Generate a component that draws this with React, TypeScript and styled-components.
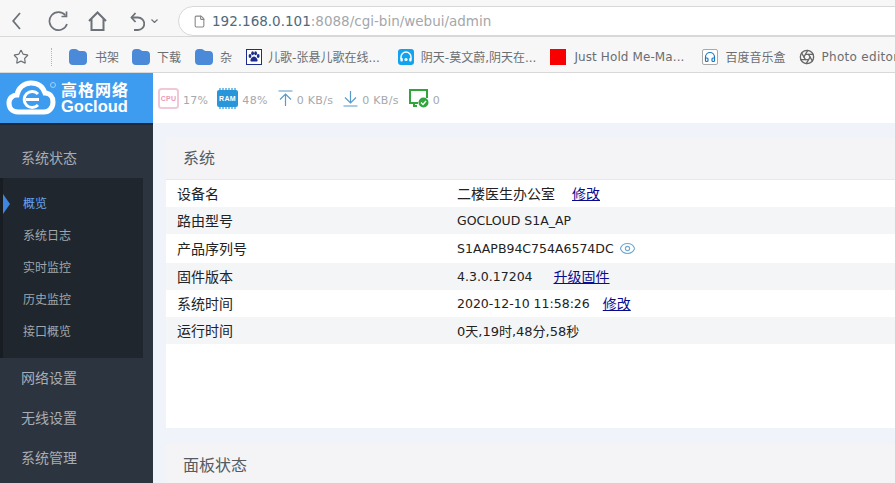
import * as React from 'react';
import styled, { createGlobalStyle } from 'styled-components';
import { Aperture, Eye, File, Headphones, Star } from 'lucide-react';

const GlobalStyle = createGlobalStyle`
  html, body {
    margin: 0;
    padding: 0;
    overflow: hidden;
    background: #fff;
    font-family: "DejaVu Sans", "Noto Sans CJK SC", sans-serif;
  }
  svg {
    flex: none;
  }
`;

const Page = styled.div`
  display: flex;
  flex-direction: column;
  width: 895px;
  height: 483px;
  overflow: hidden;
`;

const Toolbar = styled.div`
  display: flex;
  align-items: center;
  height: 36px;
  padding: 6px 0 0 12px;
  box-sizing: border-box;
  background: #f7f7f7;
  flex: none;
`;

const NavButton = styled.div<{ $left: number }>`
  display: flex;
  margin-left: ${(p) => p.$left}px;
`;

const Address = styled.div`
  display: flex;
  align-items: center;
  flex: 1;
  height: 30px;
  margin-left: 20px;
  margin-right: -20px;
  padding-left: 14px;
  box-sizing: border-box;
  background: #fff;
  border: 1px solid #d8d8d8;
  border-radius: 15px 0 0 15px;
  font-size: 13.5px;
  color: #a3a7ab;
`;

const Host = styled.span`
  color: #4e6a7c;
  margin-left: 6px;
`;

const Bookmarks = styled.div`
  display: flex;
  align-items: center;
  height: 37px;
  padding: 4px 0 0 13px;
  box-sizing: border-box;
  background: #f7f7f7;
  border-top: 1px solid #d8d8d8;
  border-bottom: 1px solid #d8d8d8;
  flex: none;
  white-space: nowrap;
`;

const Divider = styled.div`
  width: 0;
  height: 18px;
  margin: 0 17px 0 22px;
  border-left: 1px dotted #b5b5b5;
`;

const Bookmark = styled.div<{ $gap: number; $end: number; $track?: number }>`
  display: flex;
  align-items: center;
  gap: ${(p) => p.$gap}px;
  margin-right: ${(p) => p.$end}px;
  font-size: 12px;
  letter-spacing: ${(p) => p.$track ?? 0}px;
  color: #6a6e72;
  flex: none;
`;

const RedSquare = styled.div`
  width: 16px;
  height: 16px;
  background: #f80000;
`;

const BoxIcon = styled.div`
  display: flex;
  align-items: center;
  justify-content: center;
  width: 16px;
  height: 16px;
  box-sizing: border-box;
  border: 1px solid #a9a9a9;
  border-radius: 2px;
  background: #fff;
  color: #1a78c2;
`;

const Shell = styled.div`
  display: grid;
  grid-template-columns: 153px 1fr;
  grid-template-rows: 50px 1fr;
  flex: 1;
  min-height: 0;
`;

const Logo = styled.div`
  display: flex;
  align-items: center;
  gap: 3px;
  padding-left: 6px;
  background: #3e9cf0;
  color: #fff;
`;

const LogoText = styled.div`
  display: flex;
  flex-direction: column;
`;

const LogoCn = styled.span`
  font-size: 16px;
  font-weight: 700;
  letter-spacing: 1px;
  line-height: 17px;
`;

const LogoEn = styled.span`
  font-family: "Liberation Sans", sans-serif;
  font-size: 16.5px;
  font-weight: 700;
  line-height: 15px;
`;

const StatusBar = styled.div`
  display: flex;
  align-items: center;
  padding-left: 5px;
  background: #fff;
  font-size: 11px;
  letter-spacing: 0.3px;
  color: #a3a9ae;
`;

const Stat = styled.div<{ $end: number }>`
  display: flex;
  align-items: center;
  gap: 4px;
  margin-right: ${(p) => p.$end}px;
`;

const StatValue = styled.span`
  padding-top: 4px;
`;

const Sidebar = styled.nav`
  display: flex;
  flex-direction: column;
  padding-top: 13px;
  background: #2c3440;
  border-top: 2px solid #1d2a3a;
`;

const MenuItem = styled.div`
  height: 40px;
  line-height: 40px;
  padding-left: 21px;
  font-size: 14px;
  color: #a8adb3;
`;

const SubMenu = styled.div`
  width: 143px;
  height: 180px;
  padding: 10px 0 10px 20px;
  box-sizing: border-box;
  background: #1f262e;
  border-left: 3px solid #181d24;
`;

const SubItem = styled.div<{ $active?: boolean }>`
  position: relative;
  height: 32px;
  line-height: 32px;
  font-size: 12px;
  color: ${(p) => (p.$active ? '#6aa5ef' : '#a0a6ac')};
  ${(p) =>
    p.$active &&
    `&::before {
      content: '';
      position: absolute;
      left: -20px;
      top: 6px;
      border-left: 7px solid #3f86e2;
      border-top: 10px solid transparent;
      border-bottom: 10px solid transparent;
    }`}
`;

const Main = styled.main`
  display: flex;
  flex-direction: column;
  gap: 16px;
  padding: 14px 0 0 13px;
  background: #f0f3f9;
  overflow: hidden;
`;

const Panel = styled.section`
  background: #fff;
  flex: none;
`;

const PanelHead = styled.div`
  height: 43px;
  line-height: 43px;
  padding-left: 17px;
  box-sizing: border-box;
  background: #f4f4f6;
  border-bottom: 1px solid #e6e8ec;
  font-size: 16px;
  color: #555b60;
`;

const PanelBody = styled.div`
  height: 248px;
`;

const Row = styled.div<{ $tall?: boolean }>`
  display: grid;
  grid-template-columns: 280px 1fr;
  align-items: center;
  height: ${(p) => (p.$tall ? 29 : 27)}px;
  padding-left: 11px;
  color: #222;
  &:nth-child(even) {
    background: #f4f5f7;
  }
`;

const Label = styled.span`
  padding-bottom: 2px;
  font-size: 14px;
`;

const Value = styled.div`
  display: flex;
  align-items: center;
  font-size: 12.5px;
`;

const WideText = styled.span`
  padding-bottom: 2px;
  font-size: 14px;
`;

const MixedText = styled.span`
  font-size: 13px;
`;

const EditLink = styled.a<{ $left: number }>`
  margin: 0 0 2px ${(p) => p.$left}px;
  font-size: 14px;
  color: #0b0b8f;
  text-decoration: underline;
`;

const EyeIcon = styled(Eye)`
  margin-left: 5px;
  color: #6da7d3;
`;

const BackIcon = () => (
  <svg width="9" height="18" viewBox="0 0 9 18" fill="none" stroke="#6d7278" strokeWidth="1.8">
    <path d="M8 1 1.2 9 8 17" />
  </svg>
);

const ReloadIcon = () => (
  <svg width="21" height="20" viewBox="0 0 21 20" fill="none" stroke="#6d7278" strokeWidth="1.7">
    <path d="M17.500 4.500A9 9 0 1 0 19 13" />
    <path d="M18.500 0.500v5h-5" />
  </svg>
);

const HomeIcon = () => (
  <svg width="19" height="20" viewBox="0 0 19 20" fill="none" stroke="#6d7278" strokeWidth="2">
    <path d="M1 10 9.500 1.500 18 10M3.500 8v11h12V8" />
  </svg>
);

const UndoIcon = () => (
  <svg width="15" height="19" viewBox="0 0 15 19" fill="none" stroke="#6d7278" strokeWidth="1.8">
    <path d="M1.500 5.500H8a6 6 0 0 1 0 12.500H4" />
    <path d="M5.500 1 1.500 5.500 5.500 10" />
  </svg>
);

const CaretIcon = () => (
  <svg width="7" height="4" viewBox="0 0 7 4" fill="none" stroke="#6d7278" strokeWidth="1.2">
    <path d="M0.500 0.500 3.500 3.500 6.500 0.500" />
  </svg>
);

const Cloud = () => (
  <svg width="52" height="36" viewBox="0 0 52 36" fill="none">
    <path
      d="M12 32C6 32 3 28 3 23c0-5 4-8 8-8 1-7 7-12 14-12 7 0 12 4 14 10 5 0 8 4 8 9 0 6-4 10-9 10z"
      stroke="#fff"
      strokeWidth="5"
    />
    <path d="M32 14a8 8 0 1 0 0 11" stroke="#fff" strokeWidth="3" />
    <path d="M20 19.500h13" stroke="#fff" strokeWidth="3" />
    <circle cx="47" cy="5" r="2.500" stroke="#9fd0fa" strokeWidth="1" />
  </svg>
);

const Folder = () => (
  <svg width="18" height="17" viewBox="0 0 18 17">
    <path d="M0 5a4 4 0 0 1 4-4h2c2.500 0 3 2 5 2h3a4 4 0 0 1 4 4v6a4 4 0 0 1-4 4H4a4 4 0 0 1-4-4z" fill="#4a8ad8" />
  </svg>
);

const Paw = () => (
  <svg width="16" height="16" viewBox="0 0 16 16">
    <rect x="0.500" y="0.500" width="15" height="15" fill="#fff" stroke="#1c2c90" />
    <g fill="#1c2c90">
      <ellipse cx="4" cy="7" rx="1.400" ry="2" />
      <ellipse cx="6.600" cy="4.200" rx="1.400" ry="2" />
      <ellipse cx="9.600" cy="4.200" rx="1.400" ry="2" />
      <ellipse cx="12.200" cy="7" rx="1.400" ry="2" />
      <path d="M8 7.500c2 0 3.600 2.400 3.600 4 0 1.500-2 1-3.600 1s-3.600.5-3.600-1c0-1.600 1.600-4 3.600-4z" />
    </g>
  </svg>
);

const Dudu = () => (
  <svg width="16" height="16" viewBox="0 0 16 16">
    <rect width="16" height="16" rx="3" fill="#12a3ee" />
    <path d="M3 10V8a5 5 0 0 1 10 0v2" stroke="#fff" strokeWidth="1.4" fill="none" />
    <rect x="2.400" y="9" width="2.400" height="3.400" rx="1" fill="#fff" />
    <rect x="11.200" y="9" width="2.400" height="3.400" rx="1" fill="#fff" />
    <circle cx="8" cy="10.500" r="1.600" fill="#fff" />
  </svg>
);

const CpuIcon = () => (
  <svg width="21" height="21" viewBox="0 0 21 21">
    <rect x="1" y="1" width="19" height="19" rx="2.500" fill="#fff" stroke="#f0c8d8" strokeWidth="2" />
    <text x="10.500" y="13" fontSize="7" fontWeight="700" textAnchor="middle" fill="#eb9ab8" fontFamily="Liberation Sans">
      CPU
    </text>
  </svg>
);

const RamIcon = () => (
  <svg width="21" height="21" viewBox="0 0 21 21">
    <rect x="0" y="2" width="21" height="17" rx="2" fill="#2a96da" />
    <path d="M3 0v21M6 0v21M9 0v21M12 0v21M15 0v21M18 0v21" stroke="#2a96da" strokeWidth="1.2" />
    <text x="10.500" y="13" fontSize="7" fontWeight="700" textAnchor="middle" fill="#fff" fontFamily="Liberation Sans">
      RAM
    </text>
  </svg>
);

const UploadIcon = () => (
  <svg width="15" height="17" viewBox="0 0 15 17" fill="none" stroke="#5b9ac8" strokeWidth="1.2">
    <path d="M0.500 1h14M7.500 16V4M2 9.500l5.500-5.500 5.500 5.500" />
  </svg>
);

const DownloadIcon = () => (
  <svg width="15" height="17" viewBox="0 0 15 17" fill="none" stroke="#5b9ac8" strokeWidth="1.2">
    <path d="M0.500 16h14M7.500 1v12M2 7.500l5.500 5.500 5.500-5.500" />
  </svg>
);

const MonitorIcon = () => (
  <svg width="20" height="19" viewBox="0 0 20 19" fill="none">
    <path d="M9 14H1V1h17v8M5 14v3h3" stroke="#2fa63c" strokeWidth="2" />
    <circle cx="14.500" cy="13.500" r="5" fill="#2fa63c" />
    <path d="M12 13.500l2 2 3-3.500" stroke="#fff" strokeWidth="1.4" />
  </svg>
);

const bookmarks = [
  { icon: <Folder />, text: '书架', gap: 8, end: 13 },
  { icon: <Folder />, text: '下载', gap: 7, end: 14 },
  { icon: <Folder />, text: '杂', gap: 7, end: 14 },
  { icon: <Paw />, text: '儿歌-张悬儿歌在线...', gap: 6, end: 18 },
  { icon: <Dudu />, text: '阴天-莫文蔚,阴天在...', gap: 7, end: 14 },
  { icon: <RedSquare />, text: 'Just Hold Me-Ma...', gap: 8, end: 17, track: 0.1 },
  {
    icon: (
      <BoxIcon>
        <Headphones size={12} strokeWidth={2.4} />
      </BoxIcon>
    ),
    text: '百度音乐盒',
    gap: 8,
    end: 13,
  },
  { icon: <Aperture size={16} color="#666" />, text: 'Photo editor', gap: 7, end: 0, track: 0.3 },
];

const subItems = ['概览', '系统日志', '实时监控', '历史监控', '接口概览'];

export default function App() {
  return (
    <Page>
      <GlobalStyle />
      <Toolbar>
        <BackIcon />
        <NavButton $left={27}>
          <ReloadIcon />
        </NavButton>
        <NavButton $left={19}>
          <HomeIcon />
        </NavButton>
        <NavButton $left={23}>
          <UndoIcon />
        </NavButton>
        <NavButton $left={6}>
          <CaretIcon />
        </NavButton>
        <Address>
          <File size={13} color="#888" />
          <Host>192.168.0.101</Host>
          <span>:8088/cgi-bin/webui/admin</span>
        </Address>
      </Toolbar>
      <Bookmarks>
        <Star size={16} color="#6d7278" strokeWidth={1.8} />
        <Divider />
        {bookmarks.map((b) => (
          <Bookmark key={b.text} $gap={b.gap} $end={b.end} $track={b.track}>
            {b.icon}
            <span>{b.text}</span>
          </Bookmark>
        ))}
      </Bookmarks>
      <Shell>
        <Logo>
          <Cloud />
          <LogoText>
            <LogoCn>高格网络</LogoCn>
            <LogoEn>Gocloud</LogoEn>
          </LogoText>
        </Logo>
        <StatusBar>
          <Stat $end={9}>
            <CpuIcon />
            <StatValue>17%</StatValue>
          </Stat>
          <Stat $end={10}>
            <RamIcon />
            <StatValue>48%</StatValue>
          </Stat>
          <Stat $end={10}>
            <UploadIcon />
            <StatValue>0 KB/s</StatValue>
          </Stat>
          <Stat $end={10}>
            <DownloadIcon />
            <StatValue>0 KB/s</StatValue>
          </Stat>
          <Stat $end={0}>
            <MonitorIcon />
            <StatValue>0</StatValue>
          </Stat>
        </StatusBar>
        <Sidebar>
          <MenuItem>系统状态</MenuItem>
          <SubMenu>
            {subItems.map((s, i) => (
              <SubItem key={s} $active={i === 0}>
                {s}
              </SubItem>
            ))}
          </SubMenu>
          <MenuItem>网络设置</MenuItem>
          <MenuItem>无线设置</MenuItem>
          <MenuItem>系统管理</MenuItem>
        </Sidebar>
        <Main>
          <Panel>
            <PanelHead>系统</PanelHead>
            <PanelBody>
              <Row>
                <Label>设备名</Label>
                <Value>
                  <WideText>二楼医生办公室</WideText>
                  <EditLink $left={17}>修改</EditLink>
                </Value>
              </Row>
              <Row>
                <Label>路由型号</Label>
                <Value>GOCLOUD S1A_AP</Value>
              </Row>
              <Row $tall>
                <Label>产品序列号</Label>
                <Value>
                  S1AAPB94C754A6574DC
                  <EyeIcon size={17} strokeWidth={1.5} />
                </Value>
              </Row>
              <Row>
                <Label>固件版本</Label>
                <Value>
                  4.3.0.17204
                  <EditLink $left={21}>升级固件</EditLink>
                </Value>
              </Row>
              <Row>
                <Label>系统时间</Label>
                <Value>
                  2020-12-10 11:58:26
                  <EditLink $left={13}>修改</EditLink>
                </Value>
              </Row>
              <Row>
                <Label>运行时间</Label>
                <Value>
                  <MixedText>0天,19时,48分,58秒</MixedText>
                </Value>
              </Row>
            </PanelBody>
          </Panel>
          <Panel>
            <PanelHead>面板状态</PanelHead>
          </Panel>
        </Main>
      </Shell>
    </Page>
  );
}
